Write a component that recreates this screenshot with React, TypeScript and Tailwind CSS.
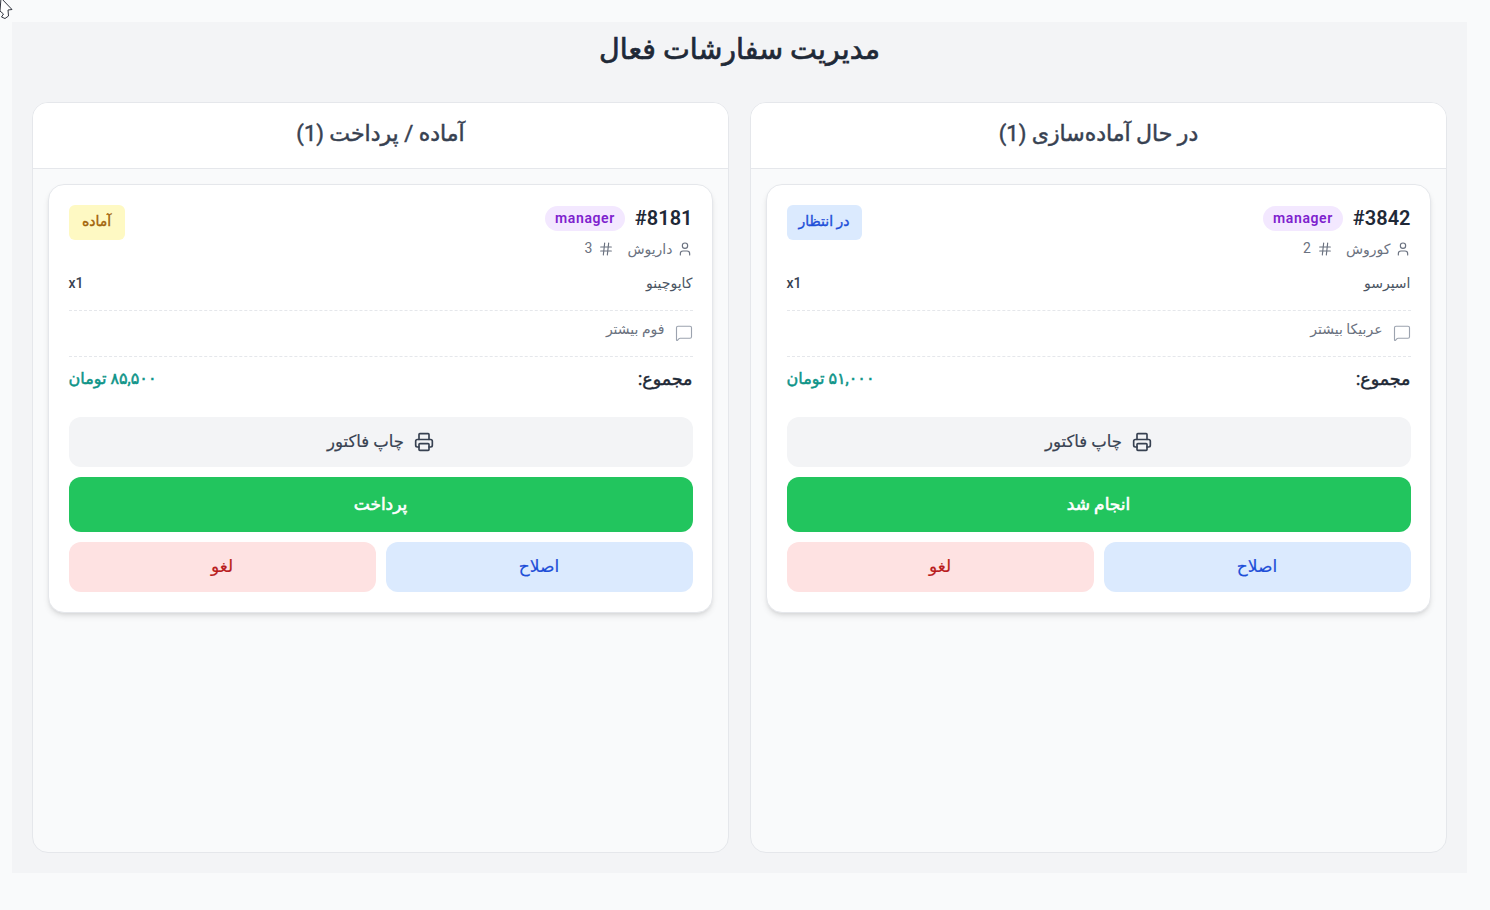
import React from 'react'
import { Hash, MessageSquare, Printer, User } from 'lucide-react'

type Order = {
  id: string
  customer: string
  table: string
  status: string
  statusClass: string
  item: string
  note: string
  total: string
  action: string
}

const columns: { title: string; order: Order }[] = [
  {
    title: 'در حال آماده‌سازی (1)',
    order: {
      id: '#3842',
      customer: 'کوروش',
      table: '2',
      status: 'در انتظار',
      statusClass: 'bg-[#dbeafe] text-[#1d4ed8]',
      item: 'اسپرسو',
      note: 'عربیکا بیشتر',
      total: '۵۱,۰۰۰ تومان',
      action: 'انجام شد',
    },
  },
  {
    title: 'آماده / پرداخت (1)',
    order: {
      id: '#8181',
      customer: 'داریوش',
      table: '3',
      status: 'آماده',
      statusClass: 'bg-[#fef9c3] text-[#a16207]',
      item: 'کاپوچینو',
      note: 'فوم بیشتر',
      total: '۸۵,۵۰۰ تومان',
      action: 'پرداخت',
    },
  },
]

const OrderCard = ({ order }: { order: Order }) => (
  <div className="rounded-2xl border border-[#e5e7eb] bg-white px-[19.5px] pt-[21px] pb-5 shadow-md">
    <div className="flex items-start justify-between">
      <div>
        <div className="flex h-[24px] items-center gap-2.5">
          <span className="text-[20px] font-semibold leading-none text-[#1f2937]">{order.id}</span>
          <span className="rounded-full bg-[#f3e8ff] px-2.5 py-[3.5px] text-sm font-semibold leading-[18px] tracking-[0.6px] text-[#7e22ce]">
            manager
          </span>
        </div>
        <div className="mt-[9px] flex h-[20px] items-center gap-[13px] text-sm text-[#6b7280]">
          <span className="flex items-center gap-1">
            <User className="h-4 w-4" strokeWidth={1.75} />
            {order.customer}
          </span>
          <span className="flex items-center gap-1.5">
            <Hash className="h-4 w-4" strokeWidth={1.75} />
            <span className="-mt-[3px]">{order.table}</span>
          </span>
        </div>
      </div>
      <span className={`-mt-px min-w-[56px] rounded-md px-3 pt-[7px] pb-[9px] text-center text-sm leading-[19px] [-webkit-text-stroke:0.35px_currentColor] ${order.statusClass}`}>
        {order.status}
      </span>
    </div>

    <div className="mt-[6px] flex h-[46px] items-center justify-between border-b border-dashed border-[#e5e7eb] pb-[9px] text-sm text-[#4b5563]">
      <span>{order.item}</span>
      <span className="font-medium text-[#374151]">x1</span>
    </div>

    <div className="flex h-[46px] items-center gap-2.5 border-b border-dashed border-[#e5e7eb] pb-[9px] text-sm text-[#6b7280]">
      <MessageSquare className="mt-[8px] h-[18px] w-[18px] text-[#9ca3af]" strokeWidth={1.5} />
      <span>{order.note}</span>
    </div>

    <div className="flex h-[46px] items-center justify-between pb-[2px]">
      <span className="text-[17.5px] text-[#1f2937] [-webkit-text-stroke:0.5px_currentColor]">مجموع:</span>
      <span className="text-base text-[#0d9488] [-webkit-text-stroke:0.5px_currentColor]">{order.total}</span>
    </div>

    <div className="mt-[14px] flex flex-col gap-2.5">
      <button className="flex h-[50px] items-center justify-center gap-2.5 rounded-xl bg-[#f3f4f6] text-[16.5px] text-[#374151] [-webkit-text-stroke:0.2px_currentColor]">
        <Printer className="h-5 w-5" />
        چاپ فاکتور
      </button>
      <button className="h-[55px] rounded-xl bg-[#22c55e] text-[17px] text-white [-webkit-text-stroke:0.6px_currentColor]">{order.action}</button>
      <div className="grid grid-cols-2 gap-2.5">
        <button className="h-[50px] rounded-xl bg-[#dbeafe] text-[17px] text-[#1d4ed8] [-webkit-text-stroke:0.2px_currentColor]">اصلاح</button>
        <button className="h-[50px] rounded-xl bg-[#fee2e2] text-[17px] text-[#b91c1c] [-webkit-text-stroke:0.2px_currentColor]">لغو</button>
      </div>
    </div>
  </div>
)

const App: React.FC = () => {
  return (
    <div
      dir="rtl"
      className="relative h-[910px] overflow-hidden bg-[#f9fafb] pt-[22px] pr-[23px] pl-3 font-['Roboto','Noto_Sans','DejaVu_Sans',sans-serif]"
    >
      {/* mouse pointer caught in the screenshot */}
      <svg className="absolute top-0 left-0 h-5 w-4" viewBox="0 0 16 20">
        <path d="M1 -2 L12 9.5 L8 10 L8.5 16 L5 18.5 L1.5 17 L3.5 14 L0 11 Z" fill="#fff" stroke="#333640" strokeWidth="1" />
      </svg>
      <div className="h-[851px] bg-[#f3f4f6] px-5 pt-[9px]">
        <h1 className="text-center text-[28.5px] leading-[38px] text-[#1f2937] [-webkit-text-stroke:0.7px_currentColor]">مدیریت سفارشات فعال</h1>
        <div className="mt-[33px] grid grid-cols-2 gap-[21px]">
          {columns.map((col) => (
            <section key={col.title} className="h-[751px] overflow-hidden rounded-2xl border border-[#e5e7eb] bg-[#f9fafb]">
              <h2 className="flex h-[66px] items-center justify-center border-b border-[#e5e7eb] bg-white pb-[5px] text-[22px] text-[#374151] [-webkit-text-stroke:0.5px_currentColor]">
                {col.title}
              </h2>
              <div className="px-[15px] pt-[15px]">
                <OrderCard order={col.order} />
              </div>
            </section>
          ))}
        </div>
      </div>
    </div>
  )
}

export default App
